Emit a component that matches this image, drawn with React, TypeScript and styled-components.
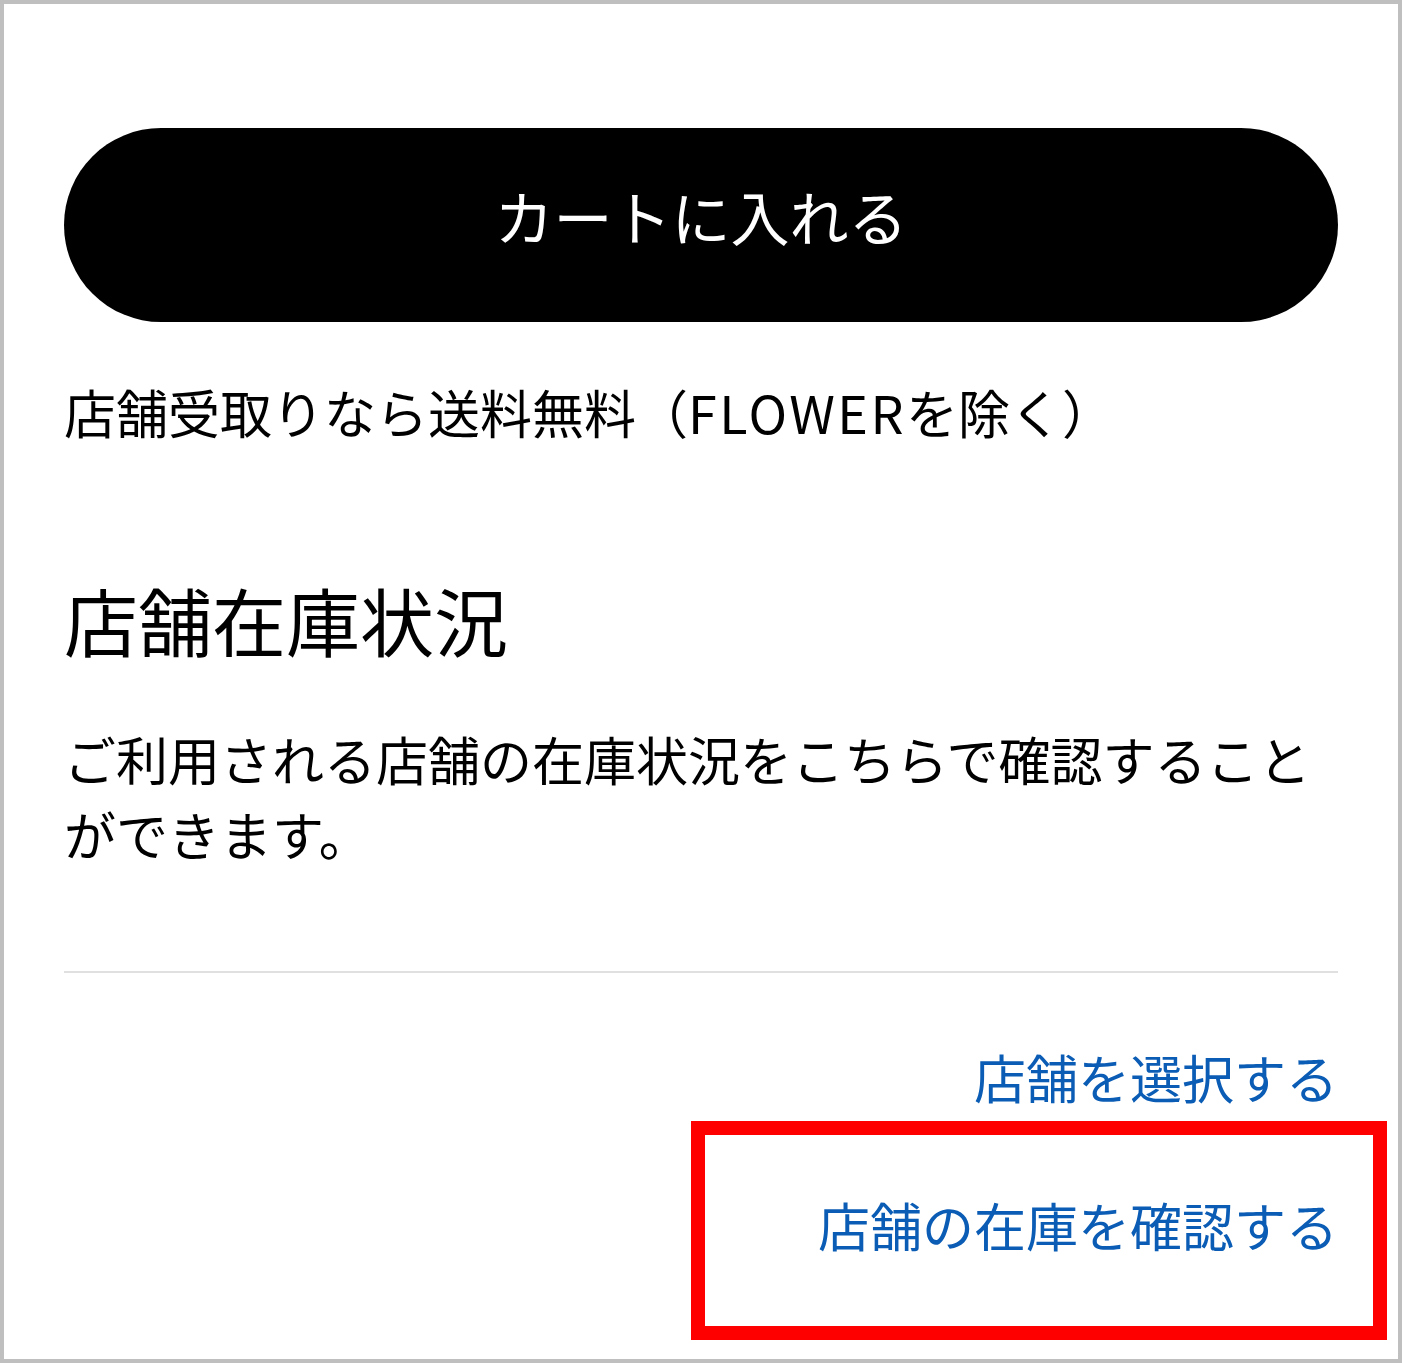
import React from 'react';
import styled, { createGlobalStyle } from 'styled-components';

const GlobalStyle = createGlobalStyle`
  html, body {
    margin: 0;
    padding: 0;
    background: #ffffff;
  }
  body {
    font-family: "Noto Sans CJK JP", "Noto Sans", sans-serif;
    color: #000;
  }
  * {
    box-sizing: border-box;
  }
`;

const Frame = styled.div`
  width: 1402px;
  height: 1363px;
  border: 4px solid #bfbfbf;
  padding: 124px 60px 0;
  display: flex;
  flex-direction: column;
  background: #fff;
`;

const CartButton = styled.button`
  height: 194px;
  width: 100%;
  border: none;
  border-radius: 97px;
  background: #000;
  color: #fff;
  font-family: inherit;
  font-size: 59px;
  font-weight: 400;
  padding: 0 0 20px;
  cursor: pointer;
  display: flex;
  align-items: center;
  justify-content: center;
`;

const Note = styled.p`
  margin: 52px 0 0;
  font-size: 52px;
  line-height: 75px;
  white-space: nowrap;
`;

const Latin = styled.span`
  letter-spacing: 2.5px;
`;

const Heading = styled.h2`
  margin: 120px 0 0;
  font-size: 74px;
  font-weight: 400;
  line-height: 100px;
`;

const Description = styled.p`
  margin: 52px 0 0;
  font-size: 52px;
  line-height: 75px;
`;

const Divider = styled.hr`
  margin: 100px 0 0;
  height: 2px;
  border: none;
  background: #e0e0e0;
`;

const Links = styled.div`
  display: flex;
  flex-direction: column;
  align-items: flex-end;
  margin-top: 66px;
  gap: 73px;
`;

const LinkRow = styled.div`
  position: relative;
  width: 100%;
  display: flex;
  justify-content: flex-end;
`;

const StoreLink = styled.a`
  font-size: 52px;
  line-height: 75px;
  color: #0b5cb5;
  text-decoration: none;
  cursor: pointer;
`;

// red annotation frame drawn over the second link
const Highlight = styled.div`
  position: absolute;
  top: -66px;
  bottom: -78px;
  left: 627px;
  right: -49px;
  border: 14px solid #ff0000;
  pointer-events: none;
`;

const App: React.FC = () => {
  return (
    <>
      <GlobalStyle />
      <Frame>
        <CartButton>カートに入れる</CartButton>
        <Note>
          店舗受取りなら送料無料（<Latin>FLOWER</Latin>を除く）
        </Note>
        <Heading>店舗在庫状況</Heading>
        <Description>
          ご利用される店舗の在庫状況をこちらで確認することができます。
        </Description>
        <Divider />
        <Links>
          <LinkRow>
            <StoreLink>店舗を選択する</StoreLink>
          </LinkRow>
          <LinkRow>
            <StoreLink>店舗の在庫を確認する</StoreLink>
            <Highlight />
          </LinkRow>
        </Links>
      </Frame>
    </>
  );
};

export default App;
